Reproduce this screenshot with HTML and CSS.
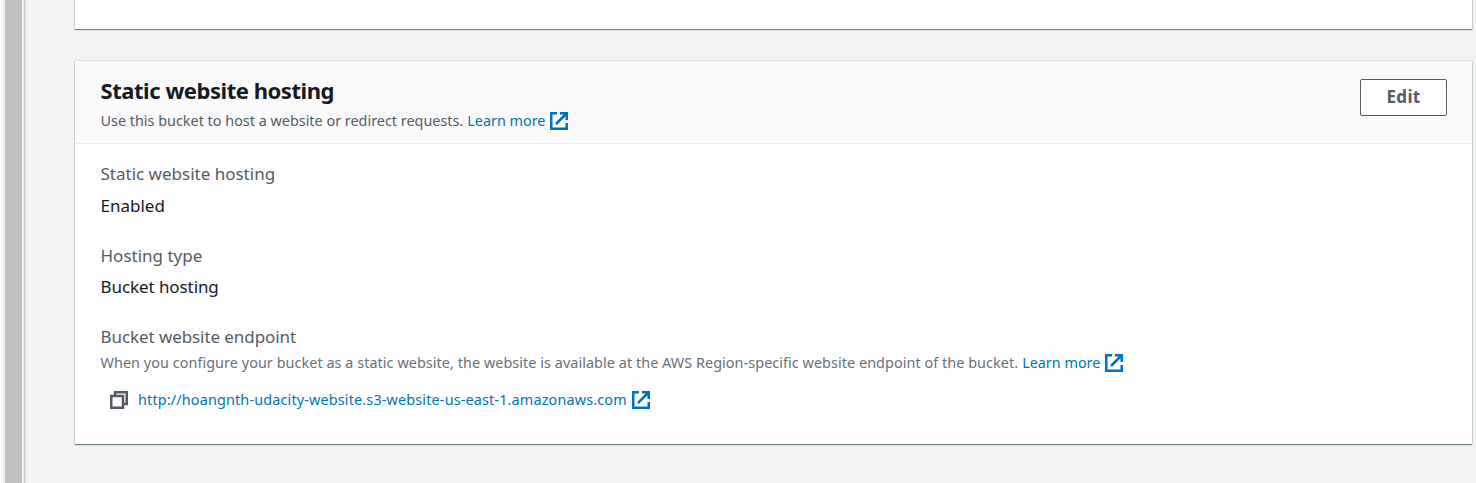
FILE: index.html
```
<!DOCTYPE html>
<html lang="en">
<head>
<meta charset="utf-8">
<title>Static website hosting</title>
<link rel="stylesheet" href="styles.css">
</head>
<body>
<div class="page">
  <div class="rail"></div>
  <main class="content">
    <section class="card card-previous"></section>
    <section class="card hosting">
      <header class="card-header">
        <div>
          <h2 class="title">Static website hosting</h2>
          <p class="description"><span>Use this bucket to host a website or redirect requests.</span><a class="link more">Learn more</a><svg class="external" viewBox="0 0 18 18"><path d="M7 1.25H1.25v15.5h15.5V11M10 1.25h6.75V8M16.5 1.5L6 12"/></svg></p>
        </div>
        <button class="edit">Edit</button>
      </header>
      <div class="card-body">
        <div class="field"><div class="label">Static website hosting</div><div class="value">Enabled</div></div>
        <div class="field"><div class="label">Hosting type</div><div class="value bucket">Bucket hosting</div></div>
        <div class="field">
          <div class="label endpoint-label">Bucket website endpoint</div>
          <p class="description hint"><span class="hint-text">When you configure your bucket as a static website, the website is available at the AWS Region-specific website endpoint of the bucket.</span><a class="link more">Learn more</a><svg class="external" viewBox="0 0 18 18"><path d="M7 1.25H1.25v15.5h15.5V11M10 1.25h6.75V8M16.5 1.5L6 12"/></svg></p>
          <div class="endpoint"><svg class="copy" viewBox="0 0 18 18"><path d="M1.25 5h11.75v11.75H1.25zM5 5V1.25h11.75V13H13"/></svg><a class="link url">http://hoangnth-udacity-website.s3-website-us-east-1.amazonaws.com</a><svg class="external" viewBox="0 0 18 18"><path d="M7 1.25H1.25v15.5h15.5V11M10 1.25h6.75V8M16.5 1.5L6 12"/></svg></div>
        </div>
      </div>
    </section>
  </main>
</div>
</body>
</html>
```
FILE: styles.css
```
* { box-sizing: border-box; }
body { margin: 0; background: #f2f3f3; font-family: "Noto Sans", sans-serif; color: #16191f; }
.page { display: flex; height: 483px; overflow: hidden; background: #f1f3f3; }
.rail { width: 26px; background: linear-gradient(90deg, #fff 3px, #f1f1f1 3px 5px, #c1c1c1 5px 22px, #f1f1f1 22px 24px, #c5cccf 24px 25px, #dfe5e5 25px); }
.content { flex: 1; padding: 0 4px 0 49px; }
.card { background: #fff; box-shadow: 0 1px 1px rgba(0,28,36,.5), 0 0 1px rgba(0,28,36,.5); }
.card-previous { height: 29px; margin-bottom: 32px; }
.hosting { height: 383px; }
.card-header { display: flex; justify-content: space-between; height: 83px; padding: 18px 25px 0 25.5px; background: #fafafa; border-bottom: 1px solid #eaeded; }
.title { margin: -2px 0 0; font-size: 22px; line-height: 26px; letter-spacing: -.45px; }
.description { display: flex; align-items: center; margin: 8px 0 0; font-size: 14.4px; line-height: 20px; color: #545b64; white-space: nowrap; }
.link { color: #0073bb; }
.more { margin-left: 4px; }
.external { width: 18px; height: 18px; margin-left: 5px; fill: none; stroke: #0073bb; stroke-width: 2.5; }
.edit { width: 87px; height: 37px; padding: 0 0 2px; border: 1px solid #545b64; border-radius: 2px; background: #fff; color: #545b64; font: 700 17px "Noto Sans", sans-serif; letter-spacing: .3px; }
.card-body { padding: 17px 25px 17px 25.5px; }
.field { margin-bottom: 25px; font-size: 17px; line-height: 25px; white-space: nowrap; }
.label { color: #545b64; }
.value { margin-top: 7px; }
.bucket { margin-top: 6px; letter-spacing: -.08px; }
.endpoint-label { letter-spacing: -.08px; }
.hint { margin-top: 4px; color: #687078; }
.hint-text { letter-spacing: .058px; }
.endpoint { display: flex; align-items: center; margin-top: 17px; padding-left: 9.5px; font-size: 14.4px; line-height: 20px; }
.url { letter-spacing: .155px; }
.copy { width: 18px; height: 18px; margin-right: 10px; fill: none; stroke: #545b64; stroke-width: 2.5; }
```
